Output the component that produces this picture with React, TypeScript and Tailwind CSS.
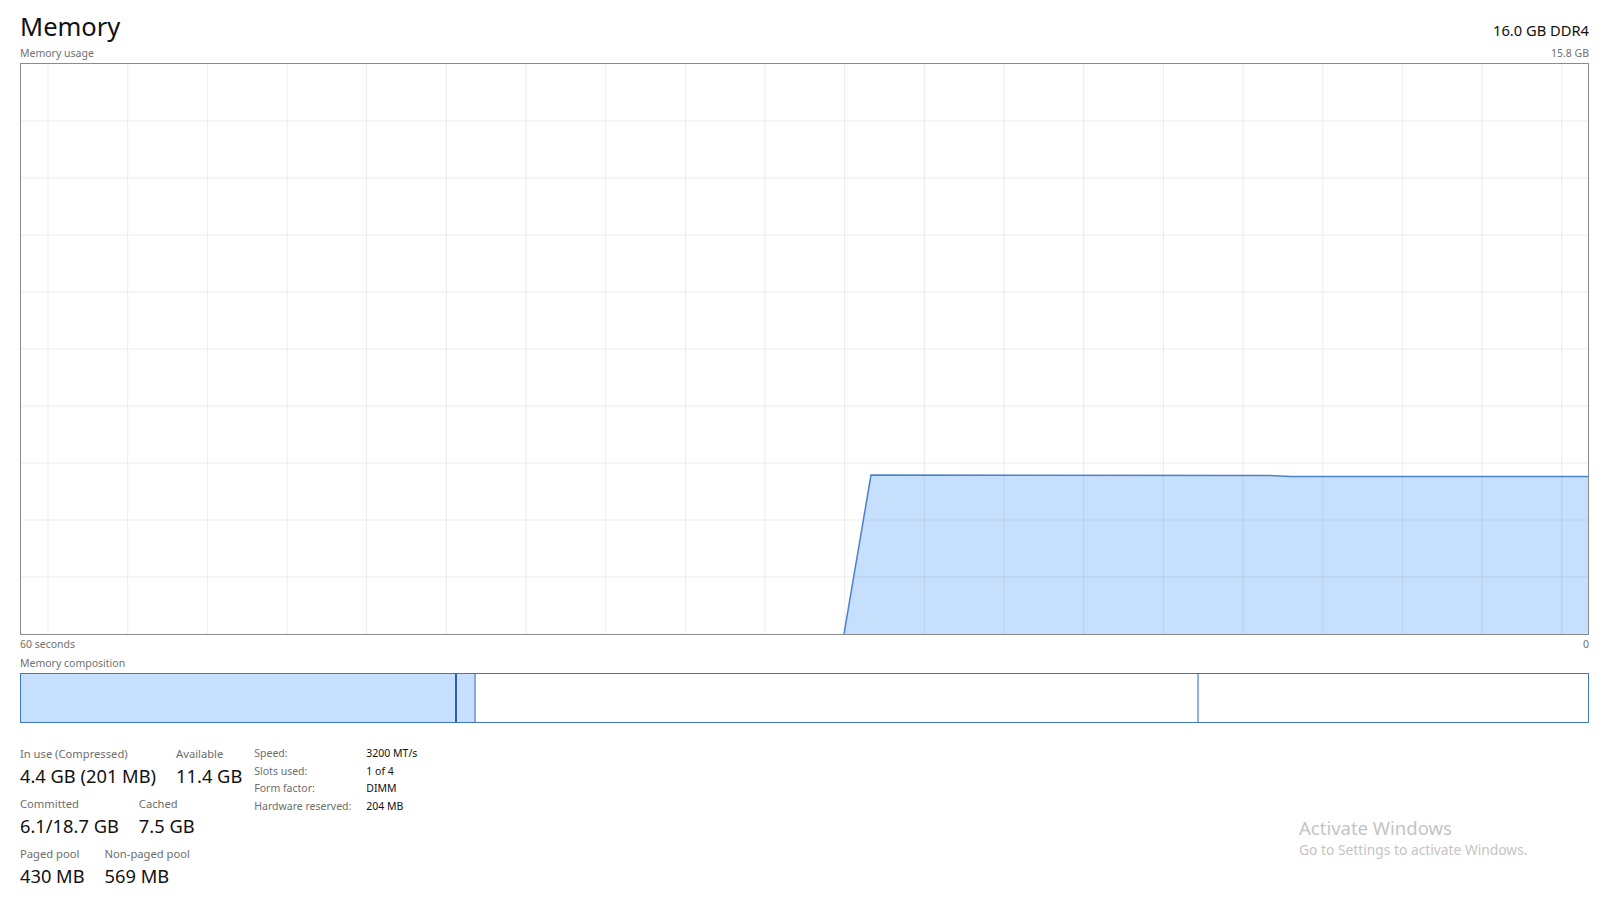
import React from "react";

const FONT = { fontFamily: '"Noto Sans", "Open Sans", sans-serif' };

// usage history, in chart-inner coordinates (1567 x 570)
const USAGE: [number, number][] = [
  [0, 570],
  [823, 570],
  [850, 411],
  [1249, 411.5],
  [1270, 412.5],
  [1567, 412.5],
];

function UsageChart() {
  const w = 1567;
  const h = 570;
  const cols = Array.from({ length: 20 }, (_, i) => 27 + i * 79.67);
  const rows = Array.from({ length: 9 }, (_, i) => (i + 1) * (h / 10));
  const line = USAGE.map(([x, y]) => `${x},${y}`).join(" ");
  const area = `${line} ${w},${h} 0,${h}`;

  return (
    <div className="h-[572px] border border-[#8b8b8b] bg-white">
      <svg width={w} height={h} className="block">
        <polygon points={area} fill="#c6dffc" />
        {cols.map((x) => (
          <line key={x} x1={x} x2={x} y1={0} y2={h} stroke="#000" strokeOpacity={0.075} />
        ))}
        {rows.map((y) => (
          <line key={y} x1={0} x2={w} y1={y} y2={y} stroke="#000" strokeOpacity={0.075} />
        ))}
        <polyline
          points={USAGE.slice(1).map(([x, y]) => `${x},${y}`).join(" ")}
          fill="none"
          stroke="#4a82cf"
          strokeWidth={1.5}
        />
      </svg>
    </div>
  );
}

function Stat({ label, value }: { label: string; value: string }) {
  return (
    <div className="flex flex-col">
      <span className="text-[11.2px] leading-[17px] text-[#6d6d6d]">{label}</span>
      <span className="text-[18.3px] leading-[28px] text-[#111]">{value}</span>
    </div>
  );
}

const SPECS = [
  ["Speed:", "3200 MT/s"],
  ["Slots used:", "1 of 4"],
  ["Form factor:", "DIMM"],
  ["Hardware reserved:", "204 MB"],
];

export default function App() {
  return (
    <div className="relative h-[900px] w-[1600px] overflow-hidden bg-white" style={FONT}>
      <div className="flex flex-col pl-5 pr-[11px]">
        <div className="flex items-baseline justify-between pt-[8px]">
          <h1 className="text-[25.5px] leading-[36px] text-[#111]">Memory</h1>
          <span className="text-[14.7px] text-[#111]">16.0 GB DDR4</span>
        </div>
        <div className="flex h-[19px] justify-between text-[10.5px] leading-[19px] text-[#707070]">
          <span>Memory usage</span>
          <span>15.8 GB</span>
        </div>

        <UsageChart />

        <div className="flex h-[18px] justify-between text-[10.5px] leading-[18px] text-[#707070]">
          <span>60 seconds</span>
          <span>0</span>
        </div>
        <div className="h-[20px] text-[10.5px] leading-[20px] text-[#707070]">Memory composition</div>

        {/* in use | modified | standby | free */}
        <div className="flex h-[50px] border border-[#3f75c4]">
          <div className="w-[436px] border-r-2 border-[#2d5ea8] bg-[#c6dffc]" />
          <div className="w-[19px] border-r-2 border-[#86a9de] bg-[#c6dffc]" />
          <div className="w-[723px] border-r-2 border-[#8fb0e8]" />
          <div className="flex-1" />
        </div>

        <div className="mt-[22px] flex items-start gap-3">
          <div className="flex flex-col gap-[5px]">
            <div className="flex gap-5">
              <Stat label="In use (Compressed)" value="4.4 GB (201 MB)" />
              <Stat label="Available" value="11.4 GB" />
            </div>
            <div className="flex gap-5">
              <Stat label="Committed" value="6.1/18.7 GB" />
              <Stat label="Cached" value="7.5 GB" />
            </div>
            <div className="flex gap-5">
              <Stat label="Paged pool" value="430 MB" />
              <Stat label="Non-paged pool" value="569 MB" />
            </div>
          </div>
          <div className="grid grid-cols-[112px_auto] text-[10.5px] leading-[17.5px]">
            {SPECS.map(([k, v]) => (
              <React.Fragment key={k}>
                <span className="text-[#6d6d6d]">{k}</span>
                <span className="text-[#111]">{v}</span>
              </React.Fragment>
            ))}
          </div>
        </div>
      </div>

      <div className="absolute left-[1299px] top-[816px] flex flex-col text-[#c4c4c4]">
        <span className="text-[18.5px] leading-[24px]">Activate Windows</span>
        <span className="text-[13.8px] leading-[20px]">Go to Settings to activate Windows.</span>
      </div>
    </div>
  );
}
